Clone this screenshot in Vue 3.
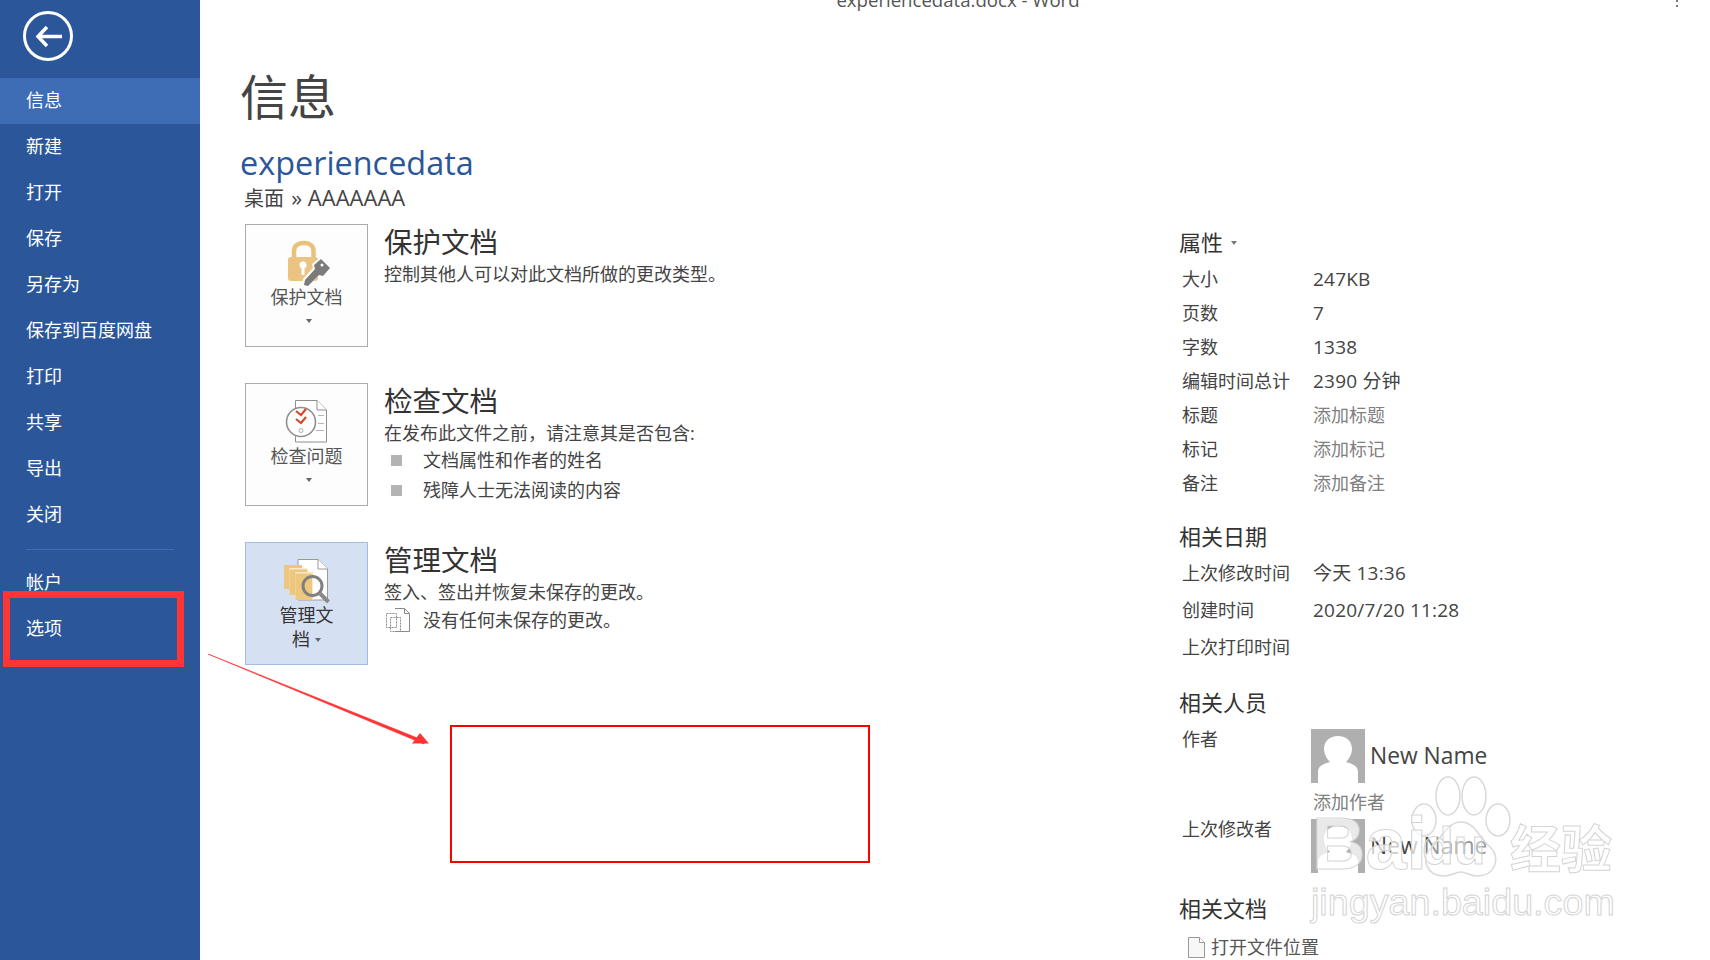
<template>
  <div class="app">
    <aside class="sidebar">
      <button class="back">
        <svg width="50" height="50" viewBox="0 0 50 50" fill="none" stroke="#fff">
          <circle cx="25" cy="25" r="23.500" stroke-width="3" />
          <path d="M15 25.500H39" stroke-width="3.500" />
          <path d="M24 16L15 25.500l9 9.500" stroke-width="3.500" />
        </svg>
      </button>
      <nav class="nav">
        <div v-for="item in mainItems" :key="item" class="nav-item" :class="{ active: item === '信息' }">{{ item }}</div>
      </nav>
      <div class="divider"></div>
      <div v-for="item in footItems" :key="item" class="nav-item">{{ item }}</div>
    </aside>

    <main class="main">
      <div class="titlebar">
        <span class="title-text">experiencedata.docx - Word</span>
        <i class="dots"></i>
      </div>
      <div class="content">
        <section class="left">
          <h1>信息</h1>
          <div class="doc-name">experiencedata</div>
          <div class="doc-path">桌面 <span class="doc-path-end">» AAAAAAA</span></div>

          <div class="cards">
            <div class="block">
              <div class="card">
                <svg class="card-icon" width="46" height="45" viewBox="0 0 46 45">
                  <path d="M10 18V10C10 4.500 14.500 2 20 2s9.500 2.500 9.500 8v8" fill="none" stroke="#e9c07c" stroke-width="4.500" />
                  <rect x="4" y="16" width="30" height="24" rx="3" fill="#ecc481" />
                  <circle cx="19" cy="24" r="3.500" fill="#fff" />
                  <rect x="17.500" y="25" width="3" height="9" fill="#fff" />
                  <path d="M18 45l1-7 10-11-1-4 9-7 10 10-8 9-4-1-10 11z" fill="#fff" />
                  <path d="M20 44l1-5 10-11-1-4 7-6 9 9-7 8-4-1-11 11z" fill="#7b7b7b" />
                  <circle cx="38" cy="24" r="1.500" fill="#fff" />
                </svg>
                <div class="card-label">保护文档</div>
                <i class="caret"></i>
              </div>
              <div class="card-text">
                <h2>保护文档</h2>
                <p>控制其他人可以对此文档所做的更改类型。</p>
              </div>
            </div>

            <div class="block">
              <div class="card">
                <svg class="card-icon" width="46" height="45" viewBox="0 0 46 45">
                  <path d="M11.500 .5H33l9.500 9.500v32H11.500z" fill="#fff" stroke="#8f8f8f" />
                  <path d="M33 .5V10h9.500" fill="#fff" stroke="#8f8f8f" />
                  <path d="M34 15.500h6M34 23.500h6M32 30.500h8" stroke="#b5b5b5" />
                  <circle cx="17" cy="22" r="14.500" fill="#fff" stroke="#8f8f8f" stroke-width="1.600" />
                  <path d="M12 11l5 4 5-6M12 19l5 4 5-6" fill="none" stroke="#d9472b" stroke-width="2.200" />
                  <circle cx="17" cy="30.500" r="2" fill="none" stroke="#aaa" />
                </svg>
                <div class="card-label">检查问题</div>
                <i class="caret"></i>
              </div>
              <div class="card-text">
                <h2>检查文档</h2>
                <p>在发布此文件之前，请注意其是否包含:</p>
                <ul>
                  <li>文档属性和作者的姓名</li>
                  <li>残障人士无法阅读的内容</li>
                </ul>
              </div>
            </div>

            <div class="block">
              <div class="card selected">
                <svg class="card-icon" width="46" height="45" viewBox="0 0 46 45">
                  <path d="M14 .5H34L43.500 10v31H14z" fill="#fff" stroke="#9a9a9a" />
                  <path d="M34 .5V10h9.500" fill="#fff" stroke="#9a9a9a" />
                  <rect x="0" y="6" width="18" height="24" fill="#eec77f" />
                  <rect x="5.500" y="9" width="18" height="27" fill="#fbe9c8" />
                  <rect x="5.500" y="10.500" width="18" height="25.500" fill="#eec77f" />
                  <rect x="11.500" y="13" width="18" height="28" fill="#fbe9c8" />
                  <rect x="11.500" y="14.500" width="17" height="26.500" fill="#eec77f" />
                  <path d="M28.500 18a9 9 0 0 1 0 18z" fill="#fff" />
                  <circle cx="28.500" cy="27" r="9.500" fill="none" stroke="#7f7f7f" stroke-width="3" />
                  <path d="M35.500 34l9 9" stroke="#8a8a8a" stroke-width="4" />
                </svg>
                <div class="card-label narrow">管理文档<i class="caret inline"></i></div>
              </div>
              <div class="card-text">
                <h2>管理文档</h2>
                <p>签入、签出并恢复未保存的更改。</p>
                <div class="no-change">
                  <svg width="24" height="24" viewBox="0 0 24 24" fill="none" stroke="#8a8a8a">
                    <path d="M9 .5h9.500l5 5v18H9" />
                    <path d="M18.500 .5v5h5" />
                    <rect x=".5" y="5.500" width="10" height="14" stroke-dasharray="2 1" />
                    <rect x="4.500" y="9.500" width="10" height="14" stroke-dasharray="2 1" />
                  </svg>
                  <span>没有任何未保存的更改。</span>
                </div>
              </div>
            </div>
          </div>
        </section>

        <section class="right">
          <h3>属性 <i class="caret small"></i></h3>
          <div v-for="row in props" :key="row[0]" class="row">
            <span class="label">{{ row[0] }}</span>
            <span :class="row[2] ? 'hint' : 'value'">{{ row[1] }}</span>
          </div>

          <h3 class="dates-head">相关日期</h3>
          <div v-for="row in dates" :key="row[0]" class="row tall">
            <span class="label">{{ row[0] }}</span>
            <span class="value">{{ row[1] }}</span>
          </div>

          <h3 class="people-head">相关人员</h3>
          <div class="person">
            <span class="label">作者</span>
            <div class="who">
              <svg width="54" height="54" viewBox="0 0 54 54">
                <rect width="54" height="54" fill="#afafaf" />
                <path d="M7 54V43c0-6 5-8 12-10-3-3-6-8-6-13 0-8 6-13 14-13s14 5 14 13c0 5-3 10-6 13 7 2 12 4 12 10v11z" fill="#fff" />
              </svg>
              <span class="who-name">New Name</span>
            </div>
          </div>
          <div class="add-author">添加作者</div>
          <div class="person">
            <span class="label">上次修改者</span>
            <div class="who">
              <svg width="54" height="54" viewBox="0 0 54 54">
                <rect width="54" height="54" fill="#afafaf" />
                <path d="M7 54V43c0-6 5-8 12-10-3-3-6-8-6-13 0-8 6-13 14-13s14 5 14 13c0 5-3 10-6 13 7 2 12 4 12 10v11z" fill="#fff" />
              </svg>
              <span class="who-name">New Name</span>
            </div>
          </div>

          <h3 class="docs-head">相关文档</h3>
          <div class="open-loc">
            <svg width="17" height="21" viewBox="0 0 17 21">
              <path d="M.5.5h11l5 5v15H.5z" fill="#f7f7f7" stroke="#9a9a9a" />
              <path d="M11.500.5v5h5" fill="#fff" stroke="#9a9a9a" />
            </svg>
            <span>打开文件位置</span>
          </div>
        </section>
      </div>
    </main>

    <!-- annotations drawn on top of the screenshot -->
    <div class="mark-option"></div>
    <div class="mark-empty"></div>
    <svg class="mark-arrow" width="240" height="110" viewBox="0 0 240 110">
      <path d="M0 0L217 87 216 90z" fill="#f33" stroke="#f33" stroke-width=".6" />
      <path d="M221 89.500L204 89.500 212 79z" fill="#f33" />
    </svg>

    <div class="watermark">
      <svg class="paw" width="110" height="110" viewBox="0 0 110 110" fill="rgba(255,255,255,.45)" stroke="#d9d9d9" stroke-width="1.500">
        <ellipse cx="14" cy="44" rx="12" ry="16" />
        <ellipse cx="38" cy="20" rx="12" ry="19" />
        <ellipse cx="64" cy="20" rx="12" ry="19" />
        <ellipse cx="88" cy="44" rx="12" ry="16" />
        <path d="M51 46c14 0 18 16 30 26 10 10 4 28-14 28-8 0-10-4-16-4s-9 4-17 4c-17 0-24-17-13-28 11-10 16-26 30-26z" />
      </svg>
      <span class="wm-bai">Bai</span>
      <span class="wm-du">du</span>
      <span class="wm-jy">经验</span>
      <span class="wm-url">jingyan.baidu.com</span>
    </div>
  </div>
</template>

<script setup>
const mainItems = ['信息', '新建', '打开', '保存', '另存为', '保存到百度网盘', '打印', '共享', '导出', '关闭']
const footItems = ['帐户', '选项']

const props = [
  ['大小', '247KB'],
  ['页数', '7'],
  ['字数', '1338'],
  ['编辑时间总计', '2390 分钟'],
  ['标题', '添加标题', true],
  ['标记', '添加标记', true],
  ['备注', '添加备注', true]
]

const dates = [
  ['上次修改时间', '今天 13:36'],
  ['创建时间', '2020/7/20 11:28'],
  ['上次打印时间', '']
]
</script>

<style>
html,
body {
  margin: 0;
  background: #fff;
  overflow: hidden;
}
</style>

<style scoped>
.app {
  position: relative;
  display: flex;
  width: 1710px;
  height: 960px;
  overflow: hidden;
  background: #fff;
  color: #444;
  font-family: "Open Sans", "Noto Sans CJK SC", sans-serif;
  font-size: 18px;
}
.sidebar {
  flex: none;
  width: 200px;
  box-sizing: border-box;
  padding-top: 11px;
  background: #2b579a;
  color: #fff;
}
.back {
  display: block;
  margin: 0 0 17px 23px;
  padding: 0;
  width: 50px;
  height: 50px;
  border: none;
  background: none;
}
.back svg {
  display: block;
}
.nav-item {
  height: 46px;
  padding-left: 26px;
  line-height: 44px;
}
.nav-item.active {
  background: #3e6db5;
}
.divider {
  height: 1px;
  margin: 11px 26px 10px;
  background: #3e6db5;
}
.main {
  flex: 1;
  min-width: 0;
}
.titlebar {
  position: relative;
  height: 10px;
  line-height: 0;
  text-align: center;
  color: #555;
}
.title-text {
  margin-left: 6px;
  font-size: 18.600px;
}
.dots {
  position: absolute;
  top: 0;
  right: 32px;
  width: 2px;
  height: 2px;
  background: #777;
  box-shadow: 0 5px 0 #777;
}
.content {
  display: flex;
}
.left {
  width: 979px;
  flex: none;
  padding-left: 40px;
  box-sizing: border-box;
}
h1 {
  margin: 59px 0 15px;
  font-size: 48px;
  font-weight: 400;
  line-height: 56px;
  color: #444;
}
.doc-name {
  font-size: 32.400px;
  line-height: 44px;
  color: #2b579a;
}
.doc-path {
  height: 28px;
  margin: -1px 0 13px 4px;
  font-size: 20px;
  line-height: 28px;
}
.doc-path-end {
  margin-left: 2px;
  font-size: 22px;
}
.cards {
  display: flex;
  flex-direction: column;
  gap: 36px;
  padding-left: 5px;
}
.block {
  display: flex;
  height: 123px;
}
.card {
  flex: none;
  display: flex;
  flex-direction: column;
  align-items: center;
  width: 123px;
  height: 123px;
  box-sizing: border-box;
  padding-top: 16px;
  border: 1px solid #ababab;
  background: #fdfdfd;
}
.card.selected {
  border-color: #a3bde3;
  background: #d5e1f2;
  color: #333;
}
.card-icon {
  display: block;
  flex: none;
  overflow: visible;
}
.card-label {
  margin-top: -1px;
  line-height: 24px;
  text-align: center;
  color: #555;
}
.card-label.narrow {
  width: 56px;
  color: #333;
}
.caret {
  display: block;
  width: 0;
  height: 0;
  margin: 10px 0 0 4px;
  border-left: 3.500px solid transparent;
  border-right: 3.500px solid transparent;
  border-top: 4px solid #666;
}
.caret.inline {
  display: inline-block;
  margin: 0 0 3px 5px;
  vertical-align: middle;
}
.caret.small {
  display: inline-block;
  margin: 0 0 4px 2px;
  vertical-align: middle;
  border-top-color: #777;
}
.card-text {
  margin-left: 16px;
}
h2 {
  margin: 0;
  font-size: 28.500px;
  font-weight: 400;
  line-height: 36px;
  color: #333;
}
.card-text p {
  margin: 0;
  line-height: 28px;
}
ul {
  margin: -1px 0 0;
  padding: 0;
  list-style: none;
}
li {
  position: relative;
  padding-left: 39px;
  line-height: 28px;
}
li + li {
  margin-top: 2px;
}
li::before {
  content: "";
  position: absolute;
  left: 7px;
  top: 9px;
  width: 11px;
  height: 11px;
  background: #b3b3b3;
}
.no-change {
  display: flex;
  align-items: center;
  gap: 13px;
  padding-left: 2px;
  line-height: 28px;
}
.no-change svg {
  flex: none;
}
.right {
  flex: 1;
  padding-top: 217px;
}
h3 {
  margin: 0 0 5px;
  font-size: 22px;
  font-weight: 400;
  line-height: 30px;
  color: #333;
}
h3.dates-head {
  margin: 21px 0 4px;
}
h3.people-head {
  margin: 21px 0 8px;
}
h3.docs-head {
  margin: 20px 0 0;
}
.row {
  display: flex;
  height: 34px;
  line-height: 34px;
}
.row.tall {
  height: 37px;
  line-height: 37px;
}
.label {
  flex: none;
  width: 134px;
  box-sizing: border-box;
  padding-left: 3px;
}
.value {
  font-size: 19px;
  letter-spacing: .2px;
}
.hint {
  color: #808080;
}
.person {
  display: flex;
  line-height: 28px;
}
.who {
  display: flex;
  align-items: center;
  gap: 5px;
  margin: 4px 0 0 -2px;
}
.who svg {
  display: block;
}
.who-name {
  font-size: 22.800px;
  color: #444;
}
.add-author {
  margin: 6px 0 0 134px;
  line-height: 26px;
  color: #808080;
}
.open-loc {
  display: flex;
  align-items: center;
  gap: 6px;
  margin-top: 10px;
  padding-left: 9px;
  line-height: 28px;
  color: #555;
}
.mark-option {
  position: absolute;
  left: 3px;
  top: 591px;
  width: 181px;
  height: 76px;
  box-sizing: border-box;
  border: 7px solid #fd3535;
}
.mark-empty {
  position: absolute;
  left: 450px;
  top: 725px;
  width: 420px;
  height: 138px;
  box-sizing: border-box;
  border: 2px solid #f00;
}
.mark-arrow {
  position: absolute;
  left: 208px;
  top: 654px;
}
.watermark {
  position: absolute;
  left: 1300px;
  top: 770px;
  width: 340px;
  height: 160px;
  pointer-events: none;
}
.watermark span {
  position: absolute;
  color: rgba(255, 255, 255, .72);
  -webkit-text-stroke: 1px #d4d4d4;
}
.watermark .wm-du {
  color: rgba(255, 255, 255, .35);
}
.paw {
  position: absolute;
  left: 110px;
  top: 6px;
}
.wm-bai {
  left: 12px;
  top: 38px;
  font: 700 74px/72px "Liberation Sans", sans-serif;
}
.wm-du {
  left: 122px;
  top: 46px;
  font: 700 52px/60px "Liberation Sans", sans-serif;
}
.wm-jy {
  left: 210px;
  top: 46px;
  font: 700 51px/60px "Noto Sans CJK SC", sans-serif;
}
.wm-url {
  left: 11px;
  top: 108px;
  font: 400 37.700px/48px "Liberation Sans", sans-serif;
}
</style>
